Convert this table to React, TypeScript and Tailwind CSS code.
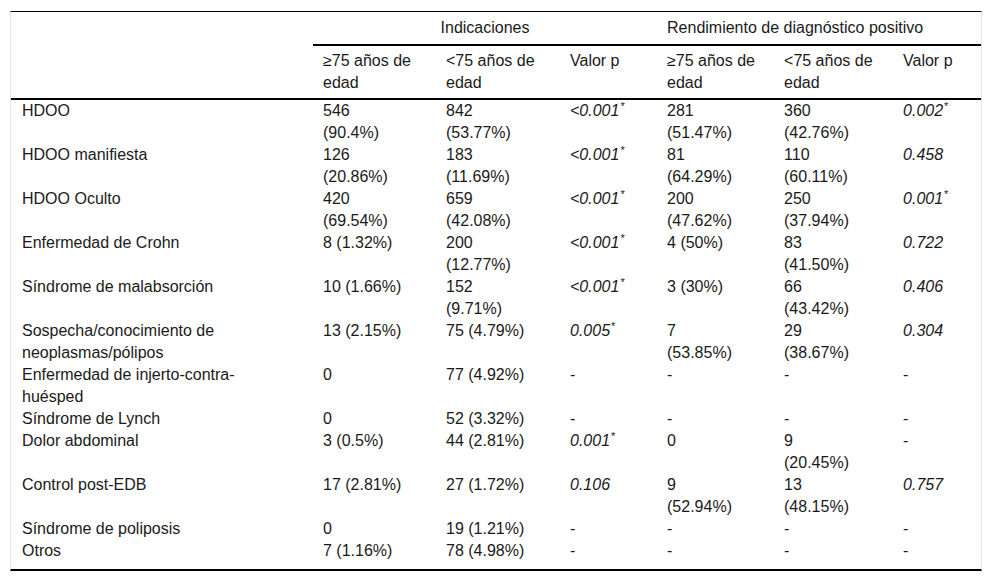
import React from "react";

type Cell = string;

const rows: Cell[][] = [
  ["HDOO", "546|(90.4%)", "842|(53.77%)", "<0.001*", "281|(51.47%)", "360|(42.76%)", "0.002*"],
  ["HDOO manifiesta", "126|(20.86%)", "183|(11.69%)", "<0.001*", "81|(64.29%)", "110|(60.11%)", "0.458"],
  ["HDOO Oculto", "420|(69.54%)", "659|(42.08%)", "<0.001*", "200|(47.62%)", "250|(37.94%)", "0.001*"],
  ["Enfermedad de Crohn", "8 (1.32%)", "200|(12.77%)", "<0.001*", "4 (50%)", "83|(41.50%)", "0.722"],
  ["Síndrome de malabsorción", "10 (1.66%)", "152|(9.71%)", "<0.001*", "3 (30%)", "66|(43.42%)", "0.406"],
  ["Sospecha/conocimiento de|neoplasmas/pólipos", "13 (2.15%)", "75 (4.79%)", "0.005*", "7|(53.85%)", "29|(38.67%)", "0.304"],
  ["Enfermedad de injerto-contra-|huésped", "0", "77 (4.92%)", "-", "-", "-", "-"],
  ["Síndrome de Lynch", "0", "52 (3.32%)", "-", "-", "-", "-"],
  ["Dolor abdominal", "3 (0.5%)", "44 (2.81%)", "0.001*", "0", "9|(20.45%)", "-"],
  ["Control post-EDB", "17 (2.81%)", "27 (1.72%)", "0.106", "9|(52.94%)", "13|(48.15%)", "0.757"],
  ["Síndrome de poliposis", "0", "19 (1.21%)", "-", "-", "-", "-"],
  ["Otros", "7 (1.16%)", "78 (4.98%)", "-", "-", "-", "-"],
];

function Lines({ text }: { text: string }) {
  const parts = text.split("|");
  return (
    <>
      {parts.map((p, i) => (
        <div key={i} className="whitespace-nowrap">
          {p}
        </div>
      ))}
    </>
  );
}

function PValue({ text }: { text: string }) {
  if (text === "-") return <span>-</span>;
  const star = text.endsWith("*");
  const v = star ? text.slice(0, -1) : text;
  return (
    <span className="italic whitespace-nowrap">
      {v}
      {star && (
        <span className="inline-block align-top text-[11px] leading-none not-italic relative top-[1px] ml-[1px]">
          *
        </span>
      )}
    </span>
  );
}

export default function App() {
  return (
    <div
      className="bg-white w-[992px] h-[581px] pt-[11px] px-[10px] text-[#1a1a1a] text-[16px] leading-[22px]"
      style={{ fontFamily: '"Liberation Sans", Arial, sans-serif' }}
    >
      <div className="border-t border-t-black border-x border-x-[#e4e4e4] border-b-2 border-b-black pb-[7px]">
        <table className="table-fixed border-collapse w-full">
          <colgroup>
            <col className="w-[302px]" />
            <col className="w-[123px]" />
            <col className="w-[124px]" />
            <col className="w-[97px]" />
            <col className="w-[117px]" />
            <col className="w-[119px]" />
            <col className="w-[88px]" />
          </colgroup>
          <thead>
            <tr>
              <th className="p-0" />
              <th colSpan={3} className="p-0 pt-[5px] pb-[5px] font-normal text-center border-b-2 border-b-black">
                Indicaciones
              </th>
              <th colSpan={3} className="p-0 pt-[5px] pb-[5px] pl-[10px] font-normal text-left border-b-2 border-b-black">
                Rendimiento de diagnóstico positivo
              </th>
            </tr>
            <tr className="border-b-2 border-b-black">
              <th className="p-0" />
              <th className="p-0 pl-[10px] pt-[4px] pb-[4px] font-normal text-left align-top">
                <Lines text="≥75 años de|edad" />
              </th>
              <th className="p-0 pl-[10px] pt-[4px] pb-[4px] font-normal text-left align-top">
                <Lines text="<75 años de|edad" />
              </th>
              <th className="p-0 pl-[10px] pt-[4px] pb-[4px] font-normal text-left align-top">Valor p</th>
              <th className="p-0 pl-[10px] pt-[4px] pb-[4px] font-normal text-left align-top">
                <Lines text="≥75 años de|edad" />
              </th>
              <th className="p-0 pl-[10px] pt-[4px] pb-[4px] font-normal text-left align-top">
                <Lines text="<75 años de|edad" />
              </th>
              <th className="p-0 pl-[10px] pt-[4px] pb-[4px] font-normal text-left align-top">Valor p</th>
            </tr>
          </thead>
          <tbody>
            {rows.map((r, i) => (
              <tr key={i}>
                <td className="p-0 pl-[11px] align-top">
                  <Lines text={r[0]} />
                </td>
                <td className="p-0 pl-[10px] align-top">
                  <Lines text={r[1]} />
                </td>
                <td className="p-0 pl-[10px] align-top">
                  <Lines text={r[2]} />
                </td>
                <td className="p-0 pl-[10px] align-top">
                  <PValue text={r[3]} />
                </td>
                <td className="p-0 pl-[10px] align-top">
                  <Lines text={r[4]} />
                </td>
                <td className="p-0 pl-[10px] align-top">
                  <Lines text={r[5]} />
                </td>
                <td className="p-0 pl-[10px] align-top">
                  <PValue text={r[6]} />
                </td>
              </tr>
            ))}
          </tbody>
        </table>
      </div>
    </div>
  );
}
